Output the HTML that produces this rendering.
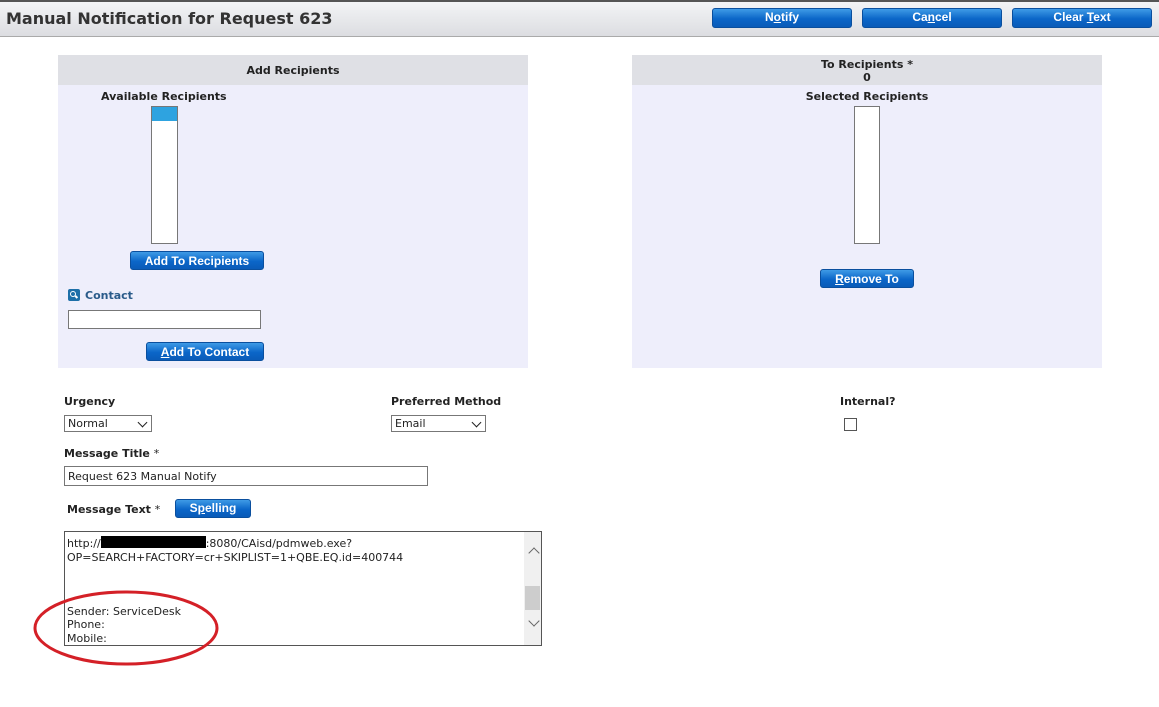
<!DOCTYPE html>
<html><head><style>
body{margin:0;width:1159px;height:707px;background:#fff;position:relative;overflow:hidden;font-family:"DejaVu Sans","Liberation Sans",sans-serif;font-size:11px;color:#222}
div,span{position:absolute;box-sizing:border-box}
.hdr{left:0;top:0;width:1159px;height:37px;background:linear-gradient(#f3f4f6,#dcdde1);border-top:2px solid #555;border-bottom:1px solid #aaa}
.title{left:6px;top:9px;font-size:16px;font-weight:bold;color:#333}
.btn{background:linear-gradient(#3f9be6,#0b66c8 55%,#0a5bb8);border:1px solid #0a4f9e;border-radius:3px;color:#fff;font-family:"Liberation Sans",sans-serif;font-weight:bold;font-size:12px;text-align:center;line-height:17px}
.panel{background:#eeeefb}
.ph{background:#dfe0e5;font-weight:bold;text-align:center;font-size:11px}
.b{font-weight:bold}
.list{background:#fff;border:1px solid #777}
.inp{background:#fff;border:1px solid #777;font-size:11px;padding-left:3px;line-height:16px}
.sel::after{content:"";position:absolute;right:5px;top:3px;width:6px;height:6px;border-right:1.5px solid #222;border-bottom:1.5px solid #222;transform:rotate(45deg)}
</style></head><body>
<div class="hdr"></div>
<div class="title">Manual Notification for Request 623</div>
<div class="btn" style="left:712px;top:8px;width:140px;height:20px">N<u>o</u>tify</div>
<div class="btn" style="left:862px;top:8px;width:140px;height:20px">Ca<u>n</u>cel</div>
<div class="btn" style="left:1012px;top:8px;width:140px;height:20px">Clear <u>T</u>ext</div>

<div class="panel" style="left:58px;top:55px;width:470px;height:313px"></div>
<div class="ph" style="left:58px;top:55px;width:470px;height:30px;line-height:32px">Add Recipients</div>
<div class="b" style="left:101px;top:90px">Available Recipients</div>
<div class="list" style="left:151px;top:106px;width:27px;height:138px"><div style="left:0;top:0;width:25px;height:14px;background:#2ea3e0"></div></div>
<div class="btn" style="left:130px;top:251px;width:134px;height:19px;line-height:19px">Add To Recipients</div>
<div style="left:68px;top:289px;width:12px;height:12px;background:#1d6fa8;border-radius:2px"><div style="left:2px;top:2px;width:6px;height:6px;border:1.5px solid #fff;border-radius:50%"></div><div style="left:7px;top:7px;width:3px;height:1.5px;background:#fff;transform:rotate(45deg)"></div></div>
<div class="b" style="left:85px;top:289px;color:#2a5b8a">Contact</div>
<div class="inp" style="left:68px;top:310px;width:193px;height:19px"></div>
<div class="btn" style="left:146px;top:342px;width:118px;height:19px;line-height:19px"><u>A</u>dd To Contact</div>

<div class="panel" style="left:632px;top:55px;width:470px;height:313px"></div>
<div class="ph" style="left:632px;top:55px;width:470px;height:30px;line-height:13px;padding-top:3px">To Recipients *<br>0</div>
<div class="b" style="left:632px;width:470px;text-align:center;top:90px">Selected Recipients</div>
<div class="list" style="left:854px;top:106px;width:26px;height:138px"></div>
<div class="btn" style="left:820px;top:269px;width:94px;height:19px;line-height:19px"><u>R</u>emove To</div>

<div class="b" style="left:64px;top:395px">Urgency</div>
<div class="inp sel" style="left:64px;top:415px;width:88px;height:17px;line-height:16px">Normal</div>
<div class="b" style="left:391px;top:395px">Preferred Method</div>
<div class="inp sel" style="left:391px;top:415px;width:95px;height:17px;line-height:16px">Email</div>
<div class="b" style="left:840px;top:395px">Internal?</div>
<div style="left:844px;top:418px;width:13px;height:13px;border:1px solid #555;background:#fff"></div>

<div class="b" style="left:64px;top:447px">Message Title <span style="position:static;font-weight:normal">*</span></div>
<div class="inp" style="left:64px;top:466px;width:364px;height:20px;line-height:19px">Request 623 Manual Notify</div>
<div class="b" style="left:67px;top:503px">Message Text <span style="position:static;font-weight:normal">*</span></div>
<div class="btn" style="left:175px;top:499px;width:76px;height:19px">S<u>p</u>elling</div>

<div style="left:64px;top:531px;width:478px;height:115px;border:1px solid #555;background:#fff;font-size:11px;line-height:13.5px;padding:4px 0 0 2px">
http://<span style="position:relative;display:inline-block;width:105px;height:12px;background:#000;vertical-align:-1px"></span>:8080/CAisd/pdmweb.exe?<br>OP=SEARCH+FACTORY=cr+SKIPLIST=1+QBE.EQ.id=400744<br><br><br><br>Sender: ServiceDesk<br>Phone:<br>Mobile:
<div style="right:0;top:0;width:17px;height:113px;background:#f0f0f0"></div>
<div style="right:3px;top:17px;width:8px;height:8px;border-left:1.5px solid #666;border-top:1.5px solid #666;transform:rotate(45deg)"></div>
<div style="right:1px;top:54px;width:15px;height:24px;background:#cdcdcd"></div>
<div style="right:3px;top:85px;width:8px;height:8px;border-right:1.5px solid #666;border-bottom:1.5px solid #666;transform:rotate(45deg)"></div>
</div>
<svg style="position:absolute;left:0;top:0" width="1159" height="707"><ellipse cx="126" cy="628" rx="91" ry="36" fill="none" stroke="#d42027" stroke-width="3"/></svg>
</body></html>
